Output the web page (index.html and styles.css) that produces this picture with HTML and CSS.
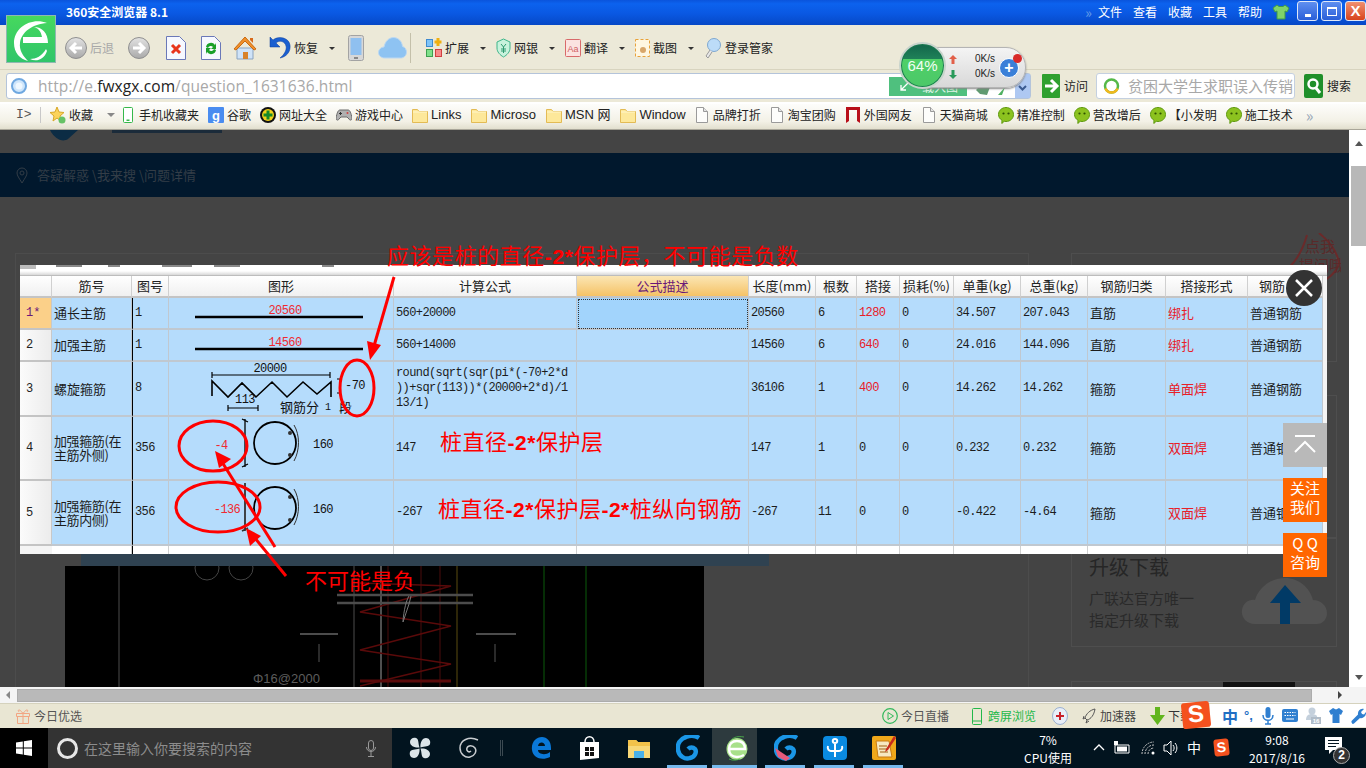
FILE: index.html
```html
<!DOCTYPE html>
<html lang="zh">
<head>
<meta charset="utf-8">
<title>360安全浏览器 8.1</title>
<link rel="stylesheet" href="styles.css">
</head>
<body>
<svg class="defs" width="0" height="0">
  <symbol id="folder" viewBox="0 0 16 16"><path d="M.5 2.500h5l1.500 2h8.500v11H.5z" fill="#fde89a" stroke="#e3bb55"/><path d="M1 5h14" stroke="#fff6cc"/></symbol>
  <symbol id="doc" viewBox="0 0 12 16"><path d="M.5.5h7l4 4v11H.5z" fill="#fdfdfb" stroke="#9a9a9a"/><path d="M7.500.5v4h4" fill="#e4e4e4" stroke="#9a9a9a"/></symbol>
  <symbol id="chat" viewBox="0 0 16 17"><path d="M8 .5c4.200 0 7.500 3 7.500 7s-3.300 7-7.500 7c-.6 0-1.200-.1-1.800-.2L3.800 16.500l.2-3.200C1.900 12 .5 10 .5 7.500.5 3.500 3.800.5 8 .5z" fill="#8cc21f" stroke="#5f9a10"/><circle cx="5.500" cy="6.500" r="1.100" fill="#2f5200"/><circle cx="10.500" cy="6.500" r="1.100" fill="#2f5200"/></symbol>
  <symbol id="gball" viewBox="0 0 22 22"><circle cx="11" cy="11" r="10.500" fill="url(#ballGrad)" stroke="#8f8f8f"/></symbol>
  <symbol id="gswirl" viewBox="0 0 24 26"><path d="M23 3c-3-2-8-3-13-1C4 4 1 9 2 15c1 6 7 10 12 8 5-1 7-6 5-9-2-2-5-2-7 0" fill="none" stroke="#1a96e6" stroke-width="4.500"/></symbol>
  <linearGradient id="ballGrad" x1="0" y1="0" x2="0" y2="1"><stop offset="0" stop-color="#e2e2e2"/><stop offset="1" stop-color="#a9a9a9"/></linearGradient>
</svg>

<header class="titlebar">
  <span class="title">360安全浏览器 8.1</span>
  <nav class="menu">
    <span class="chev">»</span><span>文件</span><span>查看</span><span>收藏</span><span>工具</span><span>帮助</span>
    <svg class="shirt" width="18" height="16" viewBox="0 0 18 16"><path d="M5 1 1 4l2 4 2-1v8h8V7l2 1 2-4-4-3-2 1.500H7z" fill="#7fd36a" stroke="#3f9a4a"/></svg>
  </nav>
  <div class="winbtns">
    <span class="wbtn"><i class="wmin"></i></span>
    <span class="wbtn"><i class="wmax"></i></span>
    <span class="wbtn wclose">X</span>
  </div>
</header>

<div class="toolbar">
  <span class="tool tool-back"><svg width="22" height="22"><use href="#gball"/><path d="M17 11H7m4-5-5 5 5 5" fill="none" stroke="#fff" stroke-width="3"/></svg><span class="dim">后退</span></span>
  <span class="tool tool-fwd"><svg width="22" height="22"><use href="#gball"/><path d="M5 11h10m-4-5 5 5-5 5" fill="none" stroke="#fff" stroke-width="3"/></svg></span>
  <span class="tool tool-stop"><svg width="20" height="24" viewBox="0 0 20 24"><path d="M.5.5h13l6 6v17H.5z" fill="#f6f8ff" stroke="#6a78b8"/><path d="M6 9l8 8m0-8-8 8" stroke="#e8341c" stroke-width="3"/></svg></span>
  <span class="tool tool-ref"><svg width="20" height="24" viewBox="0 0 20 24"><path d="M.5.5h13l6 6v17H.5z" fill="#f6f8ff" stroke="#6a78b8"/><path d="M5 11a5 5 0 0 1 9-2l1-2v6h-5l2-2a3 3 0 0 0-5 1zM15 14a5 5 0 0 1-9 2l-1 2v-6h5l-2 2a3 3 0 0 0 5-1z" fill="#1aa02a"/></svg></span>
  <span class="tool tool-home"><svg width="24" height="24" viewBox="0 0 24 24"><path d="M4 12v11h16V12z" fill="#cfe3f8" stroke="#8aa3c0"/><path d="M1 13 12 1l11 12-2 1-9-9-9 9z" fill="#f0902a" stroke="#c96a10"/><path d="M10 16h5v7h-5z" fill="#d8822a"/><path d="M17 2h3v5l-3-3z" fill="#d86a1a"/></svg></span>
  <span class="tool tool-undo"><svg width="22" height="24" viewBox="0 0 22 24"><path d="M1 1v10h10L7 7c3-3 9-2 10 3 1 4-2 9-6 12 6-1 11-6 10-13C20 2 10-1 4 4z" fill="#1a5fd0" stroke="#0f3f9a" stroke-width=".5"/></svg><span>恢复</span><i class="caret"></i></span>
  <span class="tool tool-phone"><svg width="16" height="26" viewBox="0 0 16 26"><rect x=".5" y=".5" width="15" height="25" rx="2" fill="#d7d7d7" stroke="#a3a3a3"/><rect x="2.500" y="3" width="11" height="17" fill="#8fc0f0"/><rect x="6" y="22" width="4" height="2" fill="#888"/></svg></span>
  <span class="tool tool-cloud"><svg width="29" height="22" viewBox="0 0 29 22"><path d="M7 21C3 21 .5 18.500.5 15.500.5 12.500 3 10 6 10c1-5.500 5-9.500 9.500-9.500S24 4 24.500 9.500c2.500.5 4 3 4 5.500 0 3.500-2.500 6-6 6z" fill="#8ec3f2" stroke="#bcd8f2"/></svg></span>
  <span class="tool-sep"></span>
  <span class="tool tool-ext"><svg width="16" height="20" viewBox="0 0 16 20"><rect x=".5" y="1.500" width="6" height="7" fill="#7fc4f8" stroke="#3e8ad0"/><rect x=".5" y="11.500" width="6" height="7" fill="#7fe08a" stroke="#3ea050"/><rect x="9.500" y="11.500" width="6" height="7" fill="#f88a8a" stroke="#d04040"/><path d="M12 0v8M8.500 4h7" stroke="#f0b010" stroke-width="3"/></svg><span>扩展</span><i class="caret"></i></span>
  <span class="tool tool-bank"><svg width="15" height="20" viewBox="0 0 15 20"><path d="M7.500 1 14 4v6c0 4-3 7-6.500 9C4 17 1 14 1 10V4z" fill="#c8f2dc" stroke="#3fb58a"/><path d="M5 6l2.500 3L10 6M7.500 9v6M5 11h5M5 13h5" stroke="#2f9a70" fill="none"/></svg><span>网银</span><i class="caret"></i></span>
  <span class="tool tool-trans"><svg width="16" height="20" viewBox="0 0 16 20"><rect x=".5" y="1.500" width="15" height="17" rx="1" fill="#fbe3e0" stroke="#d86a6a"/><text x="8" y="14" class="aa">Aa</text></svg><span>翻译</span><i class="caret"></i></span>
  <span class="tool tool-shot"><svg width="15" height="20" viewBox="0 0 15 20"><rect x=".5" y="1.500" width="14" height="17" fill="#fff7e2" stroke="#e8a23a" stroke-dasharray="3 2"/><circle cx="8" cy="12" r="3" fill="#d8a66a"/></svg><span>截图</span><i class="caret"></i></span>
  <span class="tool tool-key"><svg width="16" height="22" viewBox="0 0 16 22"><circle cx="9" cy="8" r="6.500" fill="#bcdcf8" stroke="#7fa8d0"/><path d="M5 13 1 19l2 2 4-6" fill="#e8e8e8" stroke="#9a9a9a"/></svg><span>登录管家</span></span>
</div>

<div class="addrbar">
  <div class="addr">
    <svg class="globe" width="16" height="16" viewBox="0 0 16 16"><circle cx="8" cy="8" r="7" fill="#cfe6fb" stroke="#6fa8e0" stroke-width="2"/><circle cx="8" cy="8" r="3.500" fill="#eff8ff"/></svg>
    <span class="url">http://e.<b>fwxgx.com</b>/question_1631636.html</span>
    <span class="addr-load"><svg width="9" height="9" viewBox="0 0 9 9"><path d="M8 1 1 8M1 3v5h5" fill="none" stroke="#fff" stroke-width="1.300"/></svg><span>载入图</span></span>
    <svg class="addr-ico" width="30" height="12" viewBox="0 0 30 12"><path d="M0 6 6 0l8 3-3 8-7-1z" fill="#5f9a70"/><path d="M22 11 29 3l-3 8z" fill="#4fb060"/></svg>
    <span class="addr-drop"><svg width="9" height="6" viewBox="0 0 9 6"><path d="M1 1l3.500 3.500L8 1" fill="none" stroke="#3a5a90" stroke-width="2"/></svg></span>
  </div>
  <span class="go"><svg width="18" height="24" viewBox="0 0 18 24"><rect width="18" height="24" fill="#2fa02f" rx="1"/><path d="M3 12h11m-5-6 6 6-6 6" stroke="#fff" stroke-width="3" fill="none"/></svg><span>访问</span></span>
  <div class="searchbox">
    <svg width="18" height="18" viewBox="0 0 18 18"><circle cx="8.500" cy="9" r="6.500" fill="none" stroke="#55b848" stroke-width="2.500"/><path d="M2.500 11.500a6.500 6.500 0 0 0 12 0" fill="none" stroke="#f2b71c" stroke-width="2.500"/></svg>
    <span class="sq">贫困大学生求职误入传销</span>
  </div>
  <span class="sbtn"><svg width="19" height="24" viewBox="0 0 19 24"><rect width="19" height="24" rx="2" fill="#1f8f2a"/><circle cx="9" cy="10" r="4.500" fill="none" stroke="#fff" stroke-width="2.500"/><path d="M12 14l4 5" stroke="#fff" stroke-width="3"/></svg><span>搜索</span></span>
</div>

<div class="bookmarks">
  <span class="bm-toggle">I&gt;</span><i class="bm-sep"></i>
  <span class="bm bm-first"><svg width="16" height="18" viewBox="0 0 16 18"><path d="M7 1l2 5 5 .5-4 3.500 1 5-4-3-4 3 1-5L0 6.500 5 6z" fill="#fbd35a" stroke="#d8a828"/><circle cx="12" cy="14" r="3.500" fill="#66c266"/></svg>收藏<i class="caret bm-caret"></i></span>
  <span class="bm bm-ph"><svg width="10" height="16" viewBox="0 0 10 16"><rect x=".5" y=".5" width="9" height="15" rx="1" fill="#fff" stroke="#35b84a"/><rect x="3.500" y="12.500" width="3" height="1.500" fill="#35b84a"/></svg>手机收藏夹</span>
  <span class="bm"><svg width="16" height="16" viewBox="0 0 16 16"><rect width="16" height="16" rx="1" fill="#4a8cf0"/><text x="8" y="13" class="gg">g</text></svg>谷歌</span>
  <span class="bm"><svg width="16" height="16" viewBox="0 0 16 16"><circle cx="8" cy="8" r="8" fill="#111"/><circle cx="8" cy="8" r="6" fill="#f2d21a"/><path d="M8 3.500v9M3.500 8h9" stroke="#168a2a" stroke-width="3"/></svg>网址大全</span>
  <span class="bm"><svg width="16" height="14" viewBox="0 0 16 14"><path d="M4 2h8c2 0 3 3 4 8 .3 2-2 3-3 1l-2-2H5l-2 2c-1 2-3.300 1-3-1C1 5 2 2 4 2z" fill="#b0b0b0" stroke="#6a6a6a"/><circle cx="11.500" cy="5" r="1" fill="#d04040"/><path d="M3 5.500h3M4.500 4v3" stroke="#333"/></svg>游戏中心</span>
  <span class="bm bm-l"><svg width="16" height="16"><use href="#folder"/></svg>Links</span>
  <span class="bm bm-l"><svg width="16" height="16"><use href="#folder"/></svg>Microso</span>
  <span class="bm bm-l"><svg width="16" height="16"><use href="#folder"/></svg>MSN 网</span>
  <span class="bm bm-l"><svg width="16" height="16"><use href="#folder"/></svg>Window</span>
  <span class="bm bm-d"><svg width="12" height="16"><use href="#doc"/></svg>品牌打折</span>
  <span class="bm bm-d"><svg width="12" height="16"><use href="#doc"/></svg>淘宝团购</span>
  <span class="bm bm-r"><svg width="14" height="16" viewBox="0 0 14 16"><path d="M0 0h14v16l-3-2V3H3v11l-3 2z" fill="#b80f1a"/></svg>外国网友</span>
  <span class="bm bm-d"><svg width="12" height="16"><use href="#doc"/></svg>天猫商城</span>
  <span class="bm"><svg width="16" height="17"><use href="#chat"/></svg>精准控制</span>
  <span class="bm"><svg width="16" height="17"><use href="#chat"/></svg>营改增后</span>
  <span class="bm"><svg width="16" height="17"><use href="#chat"/></svg>【小发明</span>
  <span class="bm"><svg width="16" height="17"><use href="#chat"/></svg>施工技术</span>
  <span class="bm-more">»</span>
</div>

<div class="viewport">
  <div class="page">
    <div class="site-head">
      <svg class="fish" width="34" height="13" viewBox="0 0 34 13"><path d="M2 0c4 8 12 13 18 9L30 0z" fill="#0c2c44"/></svg>
      <span class="ghost"></span>
    </div>
    <div class="crumbs">
      <svg width="12" height="17" viewBox="0 0 12 17"><path d="M6 16C3 11 1 8.500 1 6a5 5 0 0 1 10 0c0 2.500-2 5-5 10z" fill="none" stroke="#333d47"/><circle cx="6" cy="6" r="2" fill="none" stroke="#333d47"/></svg>
      <span>答疑解惑 \我来搜 \问题详情</span>
    </div>
    <div class="columns">
      <div class="mainbox">
        <div class="bluestrip"></div>
        <svg class="cad" width="639" height="122" viewBox="0 0 639 122">
          <rect width="639" height="122" fill="#000"/>
          <circle cx="142" cy="2" r="12" fill="none" stroke="#444"/><circle cx="176" cy="2" r="12" fill="none" stroke="#444"/>
          <path d="M54 0v122M289 0v122" stroke="#4c4c4c" fill="none"/>
          <path d="M316 0v122" stroke="#6a6a6a" stroke-width="1.500"/>
          <path d="M323 0v122M356 0v122M375 0v122" stroke="#4a0c0c"/>
          <path d="M392 0v122" stroke="#5a4c10"/>
          <path d="M479 0v122M521 0v122" stroke="#0a5a0a"/>
          <path d="M295 17l91 3-91 26 91 14-91 24 91 14-91 22" fill="none" stroke="#5a0a0a" stroke-width="1.500"/>
          <path d="M295 115h91" stroke="#5a0a0a" stroke-width="3"/>
          <path d="M272 29h136M272 37h136" stroke="#4c4c4c" stroke-width="2.500"/>
          <path d="M344 30c-4 6-6 22-6 26l6-18 2-8" stroke="#777" fill="none"/>
          <path d="M235 68h38M411 68h40" stroke="#4c4c4c" stroke-width="2"/>
          <path d="M254 78v18M430 78v18" stroke="#555"/>
          <text x="188" y="117" class="cadtext">Φ16@2000</text>
        </svg>
      </div>
      <aside class="sidecol">
        <div class="sbox sbox-a"></div>
        <div class="sbox sbox-b"></div>
        <div class="sbox sbox-c">
          <h3>升级下载</h3>
          <p>广联达官方唯一</p>
          <p>指定升级下载</p>
          <svg class="upcloud" width="86" height="48" viewBox="0 0 86 48"><path d="M14 46C4 46 0 38 1 32c1-7 7-11 13-10C18 9 30 0 44 0s25 10 28 22c8 0 14 6 14 13 0 6-4 11-10 11z" fill="#525252"/><path d="M44 7 29 25h10v21h10V25h11z" fill="#013a66"/></svg>
        </div>
        <div class="sbox sbox-d"><span class="photo"></span></div>
      </aside>
    </div>
    <svg class="askbadge" width="62" height="56" viewBox="0 0 62 56"><path d="M8 36C18 28 24 16 28 2M40 0c10 8 18 18 20 30-2 10-12 16-24 24" fill="none" stroke="#6a2a2a" stroke-width="2"/><text x="26" y="19" class="asktext">点我</text><text x="20" y="38" class="asktext">提问哦</text></svg>
  </div>
  <div class="vscroll">
    <span class="arrow-up"></span>
    <span class="vthumb"></span>
    <span class="arrow-down"></span>
  </div>
</div>

<div class="hscroll"><span class="arrow-left"></span><span class="hthumb"></span><span class="arrow-right"></span></div>

<footer class="statusbar">
  <span class="st st-gift"><svg width="16" height="16" viewBox="0 0 16 16"><path d="M1.500 5.500h13v3h-13zM2.500 8.500h11v7h-11zM8 5.500v10M8 5.500C5 1 2 1 4 4M8 5.500C11 1 14 1 12 4" fill="none" stroke="#f2a582"/></svg>今日优选</span>
  <span class="st st-live"><svg width="16" height="16" viewBox="0 0 16 16"><circle cx="8" cy="8" r="7.300" fill="none" stroke="#33b85c" stroke-width="1.200"/><path d="M6 4.500v7l5.500-3.500z" fill="none" stroke="#33b85c"/></svg>今日直播</span>
  <span class="st st-cross"><svg width="10" height="17" viewBox="0 0 10 17"><rect x=".5" y=".5" width="9" height="16" rx="1" fill="none" stroke="#22b84a"/><path d="M0 13h10" stroke="#22b84a"/></svg>跨屏浏览</span>
  <span class="st st-shield"><svg width="16" height="18" viewBox="0 0 16 18"><ellipse cx="8" cy="9" rx="7.500" ry="8.500" fill="#e8eef8" stroke="#9ab0d0"/><path d="M8 5v8M4 9h8" stroke="#c8202a" stroke-width="2"/></svg></span>
  <span class="st st-rocket"><svg width="14" height="16" viewBox="0 0 14 16"><path d="M13 1C8 2 4 6 3 10l2 2c4-1 7-5 8-11zM3 10l-2 1 1-3M5 12l-1 3 3-2" fill="none" stroke="#555"/></svg>加速器</span>
  <span class="st st-dl"><svg width="15" height="18" viewBox="0 0 15 18"><path d="M5 0h5v8h5l-7.500 10L0 8h5z" fill="#62b51e"/></svg>下载</span>
</footer>

<div class="ime">
  <span class="ime-s">S</span>
  <div class="ime-bar">
    <b class="ime-zh">中</b>
    <b class="ime-dot">°,</b>
    <svg width="12" height="18" viewBox="0 0 12 18"><rect x="3.500" y="0" width="5" height="11" rx="2.500" fill="#2f7fd0"/><path d="M1 8c0 7 10 7 10 0M6 13v4M3 17h6" fill="none" stroke="#2f7fd0" stroke-width="1.500"/></svg>
    <svg width="16" height="13" viewBox="0 0 16 13"><rect width="16" height="13" rx="2" fill="#2f7fd0"/><path d="M2.500 3.500h11M2.500 6.500h11" stroke="#fff" stroke-dasharray="1.500 1"/><path d="M4 10h8" stroke="#fff"/></svg>
    <svg width="15" height="17" viewBox="0 0 15 17"><circle cx="6" cy="4" r="3.500" fill="#c4d0dc"/><path d="M0 13c0-4 2-6 6-6 3 0 4 1 5 2v4z" fill="#c4d0dc"/><rect x="5" y="10" width="10" height="7" fill="#b0bcc8"/><text x="10" y="16" class="ime-n">16</text></svg>
    <svg width="14" height="15" viewBox="0 0 14 15"><path d="M4 0 0 3l2 4 1.500-1v9h7V6L12 7l2-4-4-3-3 1.500z" fill="#2f7fd0"/></svg>
    <svg width="15" height="16" viewBox="0 0 15 16"><path d="M1 15c-1-1-.6-2 0-2.600l6-6C6.500 3 9 0 13 1l-3 3 1 2 2 .5 2-2.500c.5 4-3 7-6 6l-6 5.500c-.6.600-1.500.500-2 0z" fill="#2f7fd0"/></svg>
  </div>
</div>

<div class="taskbar">
  <span class="start"><svg width="16" height="16" viewBox="0 0 16 16"><path d="M0 2.500 6.800 1.500v6H0zM7.800 1.300 16 0v7.500H7.800zM0 8.500h6.800v6L0 13.500zM7.800 8.500H16V16l-8.200-1.300z" fill="#fff"/></svg></span>
  <div class="tsearch">
    <span class="cortana"></span>
    <span class="tstext">在这里输入你要搜索的内容</span>
    <svg class="tmic" width="10" height="17" viewBox="0 0 10 17"><rect x="2.500" y=".5" width="5" height="10" rx="2.500" fill="none" stroke="#999"/><path d="M.5 7c0 6 9 6 9 0M5 12v4M2 16.500h6" fill="none" stroke="#999"/></svg>
  </div>
  <span class="slot"><svg width="22" height="22" viewBox="0 0 22 22"><g fill="#dce4e8"><path d="M10.500 10.500C6 11 1 9 1 5c0-3 3-5 6-4 3 1 2 5 3.500 9.500z"/><path d="M11.500 10.500C11 6 13 1 17 1c3 0 5 3 4 6-1 3-5 2-9.500 3.500z"/><path d="M11.500 11.500C16 11 21 13 21 17c0 3-3 5-6 4-3-1-2-5-3.500-9.500z"/><path d="M10.500 11.500C11 16 9 21 5 21c-3 0-5-3-4-6 1-3 5-2 9.500-3.500z"/></g></svg></span>
  <span class="slot"><svg width="20" height="22" viewBox="0 0 20 22"><path d="M19 3C10-1 1 3 1 11c0 6 5 10 10 9 5-1 7-6 5-9-2-3-7-3-8 0-1 3 2 5 4 3" fill="none" stroke="#c8ccd0" stroke-width="1.500"/></svg></span>
  <i class="tsep"></i>
  <span class="slot slot-lead"><svg width="20" height="22" viewBox="0 0 20 22"><path d="M1 13C0 5 5 0 11 0c5 0 9 4 9 11v2H7c0 4 7 6 12 2v5c-8 4-17 1-18-7zm6-4h7c0-4-6-5-7 0z" fill="#0a78d8"/></svg></span>
  <span class="slot"><svg width="21" height="24" viewBox="0 0 21 24"><path d="M1 6h19v16l-19 2z" fill="#fff"/><path d="M6 6c0-7 9-7 9 0" fill="none" stroke="#fff" stroke-width="1.500"/><path d="M6 11h4v4H6zM11 11h4v4h-4zM6 16h4v4H6zM11 16h4v4h-4z" fill="#111"/></svg></span>
  <span class="slot"><svg width="22" height="20" viewBox="0 0 22 20"><path d="M0 2h8l2 2h12v16H0z" fill="#f8d878"/><path d="M0 2h8l2 2h12v4H0z" fill="#f2c24a"/><path d="M6 13h10v7H6z" fill="#4ab0e8"/></svg></span>
  <span class="slot slot-on"><svg width="24" height="26"><use href="#gswirl"/></svg><i class="under"></i></span>
  <span class="slot slot-active"><svg width="22" height="25" viewBox="0 0 22 25"><ellipse cx="11" cy="13" rx="10.500" ry="11" fill="#a8e08a"/><path d="M3 13h16c0-6-3-8-8-8-5 0-8 3-8 8s3 8 8 8c3 0 5-1 7-2" fill="none" stroke="#fff" stroke-width="2.500"/><path d="M18 1C12 0 8 1 5 4M3 23c4 2 8 1 11 0" stroke="#4aa84a" fill="none"/></svg><i class="under under-a"></i></span>
  <span class="slot slot-on"><svg width="24" height="26" viewBox="0 0 24 26"><use href="#gswirl" width="24" height="26"/><path d="M1 13l15 10-4 3-8-4z" fill="#e85a7a"/></svg><i class="under"></i></span>
  <span class="slot slot-on"><svg width="24" height="24" viewBox="0 0 24 24"><rect width="24" height="24" rx="4" fill="#0a8ae0"/><path d="M12 3c-3 0-3 4 0 4s3-4 0-4zM12 7v14M5 10c-1 3 1 5 3 5h8c2 0 4-2 3-5" fill="none" stroke="#fff" stroke-width="2"/></svg><i class="under"></i></span>
  <span class="slot slot-on"><svg width="24" height="24" viewBox="0 0 24 24"><rect width="24" height="24" rx="2" fill="#f0a81a"/><path d="M4 5h13l3 16H6z" fill="#f6e8c0" stroke="#c87a10"/><path d="M7 10h8M7 13h9M8 16h8" stroke="#a06010"/><path d="M22 0 14 13l-1 3 3-2 8-12z" fill="#c82a1a"/></svg><i class="under"></i></span>
  <div class="tray">
    <div class="cpu"><span>7%</span><span>CPU使用</span></div>
    <svg class="tr-up" width="12" height="8" viewBox="0 0 12 8"><path d="M1 7l5-5 5 5" fill="none" stroke="#fff" stroke-width="1.300"/></svg>
    <svg class="tr-bat" width="16" height="14" viewBox="0 0 16 14"><path d="M1 4h14v8H1z" fill="none" stroke="#fff"/><path d="M3 5.500h10v5H3z" fill="#fff"/><path d="M0 0h4v4H0z" fill="#fff"/></svg>
    <svg class="tr-wifi" width="14" height="14" viewBox="0 0 14 14"><path d="M1 13A12 12 0 0 1 13 1M4 13a9 9 0 0 1 9-9M7 13a6 6 0 0 1 6-6" fill="none" stroke="#c8c8c8" stroke-dasharray="2 1"/><circle cx="12" cy="12" r="1.500" fill="#fff"/></svg>
    <svg class="tr-vol" width="15" height="16" viewBox="0 0 15 16"><path d="M1 5h3l4-4v14l-4-4H1z" fill="none" stroke="#fff"/><path d="M10 5c1.500 2 1.500 4 0 6M12 3c2.500 3 2.500 7 0 10" fill="none" stroke="#fff"/></svg>
    <span class="tr-zh">中</span>
    <span class="tr-s">S</span>
    <div class="clock"><span>9:08</span><span>2017/8/16</span></div>
    <span class="notif"><svg width="17" height="18" viewBox="0 0 17 18"><path d="M0 0h17v13H8l-4 4v-4H0z" fill="#fff"/><path d="M3 3.500h11M3 6.500h11M3 9.500h8" stroke="#02141f"/></svg><b class="badge">2</b></span>
  </div>
</div>

<section class="modal">
  <div class="modal-top"><i class="g0"></i><i class="g1"></i><i class="g2"></i><i class="g3"></i><i class="g4"></i><i class="g5"></i></div>
  <div class="sheet">
    <div class="hd"></div><div class="hd">筋号</div><div class="hd">图号</div><div class="hd">图形</div><div class="hd">计算公式</div><div class="hd hd-on">公式描述</div><div class="hd">长度(mm)</div><div class="hd">根数</div><div class="hd">搭接</div><div class="hd">损耗(%)</div><div class="hd">单重(kg)</div><div class="hd">总重(kg)</div><div class="hd">钢筋归类</div><div class="hd">搭接形式</div><div class="hd hd-last">钢筋</div>

    <div class="rh rh-on">1*</div><div class="c cn">通长主筋</div><div class="c m bl">1</div>
    <div class="c fig"><svg width="225" height="32" viewBox="169 298 225 32"><path d="M195 318h168" stroke="#000" stroke-width="2.500"/><text x="285" y="315" class="red-n">20560</text></svg></div>
    <div class="c m">560+20000</div><div class="c sel"></div><div class="c m">20560</div><div class="c m">6</div><div class="c m r">1280</div><div class="c m">0</div><div class="c m">34.507</div><div class="c m">207.043</div><div class="c cn">直筋</div><div class="c cn r">绑扎</div><div class="c cn">普通钢筋</div>

    <div class="rh">2</div><div class="c cn">加强主筋</div><div class="c m bl">1</div>
    <div class="c fig"><svg width="225" height="32" viewBox="169 330 225 32"><path d="M195 350h168" stroke="#000" stroke-width="2.500"/><text x="285" y="347" class="red-n">14560</text></svg></div>
    <div class="c m">560+14000</div><div class="c"></div><div class="c m">14560</div><div class="c m">6</div><div class="c m r">640</div><div class="c m">0</div><div class="c m">24.016</div><div class="c m">144.096</div><div class="c cn">直筋</div><div class="c cn r">绑扎</div><div class="c cn">普通钢筋</div>

    <div class="rh">3</div><div class="c cn">螺旋箍筋</div><div class="c m bl">8</div>
    <div class="c fig"><svg width="225" height="55" viewBox="169 362 225 55">
      <text x="270" y="373" class="blk-n">20000</text>
      <path d="M212 376h118M212 373v6M330 373v6" stroke="#000" stroke-width="1.200" fill="none"/>
      <path d="M212 397v-15l16 16 14-14 14 14 16-15 15 15 16-15 14 12 14-12v15" fill="none" stroke="#000" stroke-width="1.600"/>
      <text x="245" y="404" class="blk-n">113</text>
      <path d="M228 409h30M228 406v6M258 406v6" stroke="#000" stroke-width="1.200" fill="none"/>
      <text x="280" y="413" class="blk-c">钢筋分</text><text x="325" y="411" class="blk-s">1</text><text x="339" y="413" class="blk-c">段</text>
      <path d="M337 380h3v14h-3" fill="none" stroke="#000"/>
      <text x="355" y="390" class="blk-n">-70</text>
    </svg></div>
    <div class="c m f3">round(sqrt(sqr(pi*(-70+2*d<br>))+sqr(113))*(20000+2*d)/1<br>13/1)</div><div class="c"></div><div class="c m">36106</div><div class="c m">1</div><div class="c m r">400</div><div class="c m">0</div><div class="c m">14.262</div><div class="c m">14.262</div><div class="c cn">箍筋</div><div class="c cn r">单面焊</div><div class="c cn">普通钢筋</div>

    <div class="rh">4</div><div class="c cn l2">加强箍筋(在<br>主筋外侧)</div><div class="c m bl">356</div>
    <div class="c fig"><svg width="225" height="64" viewBox="169 417 225 64">
      <text x="221" y="450" class="red-n">-4</text>
      <path d="M245 420v48M242 420l6 3M242 468l6-3" stroke="#000" stroke-width="1.300" fill="none"/>
      <circle cx="275" cy="444" r="21" fill="none" stroke="#000" stroke-width="1.800"/>
      <circle cx="290" cy="434" r="2" fill="#333"/><circle cx="290" cy="456" r="2" fill="#333"/>
      <path d="M294 426c6 10 6 25 0 36" fill="none" stroke="#333"/>
      <text x="323" y="449" class="blk-n">160</text>
    </svg></div>
    <div class="c m">147</div><div class="c"></div><div class="c m">147</div><div class="c m">1</div><div class="c m">0</div><div class="c m">0</div><div class="c m">0.232</div><div class="c m">0.232</div><div class="c cn">箍筋</div><div class="c cn r">双面焊</div><div class="c cn">普通钢筋</div>

    <div class="rh">5</div><div class="c cn l2">加强箍筋(在<br>主筋内侧)</div><div class="c m bl">356</div>
    <div class="c fig"><svg width="225" height="65" viewBox="169 481 225 65">
      <text x="227" y="514" class="red-n">-136</text>
      <path d="M245 484v48M242 532l6-3" stroke="#333" stroke-width="1.800" fill="none"/>
      <circle cx="275" cy="509" r="21" fill="none" stroke="#000" stroke-width="1.800"/>
      <circle cx="290" cy="498" r="2" fill="#333"/><circle cx="290" cy="521" r="2" fill="#333"/>
      <path d="M294 490c6 10 6 25 0 36" fill="none" stroke="#333"/>
      <text x="323" y="514" class="blk-n">160</text>
    </svg></div>
    <div class="c m">-267</div><div class="c"></div><div class="c m">-267</div><div class="c m">11</div><div class="c m">0</div><div class="c m">0</div><div class="c m">-0.422</div><div class="c m">-4.64</div><div class="c cn">箍筋</div><div class="c cn r">双面焊</div><div class="c cn">普通钢筋</div>

    <div class="rh rh6"></div><div class="e"></div><div class="e bl"></div><div class="e"></div><div class="e"></div><div class="e"></div><div class="e"></div><div class="e"></div><div class="e"></div><div class="e"></div><div class="e"></div><div class="e"></div><div class="e"></div><div class="e"></div><div class="e"></div>
  </div>
</section>

<svg class="marks" width="1366" height="768" viewBox="0 0 1366 768">
  <g fill="none" stroke="#f00" stroke-width="3">
    <ellipse cx="357" cy="388" rx="17" ry="28"/>
    <ellipse cx="213" cy="446" rx="34" ry="25"/>
    <ellipse cx="218" cy="507" rx="42" ry="25"/>
    <path d="M394 277 374 346"/>
    <path d="M275 547 222 462"/>
    <path d="M286 576 254 537"/>
  </g>
  <g fill="#f00">
    <path d="M370 360 367 341 381 345z"/>
    <path d="M215 451 231 459 219 468z"/>
    <path d="M246 528 261 536 250 546z"/>
  </g>
</svg>
<p class="note n1">应该是桩的直径<b>-2*</b>保护层，不可能是负数</p>
<p class="note n2">桩直径<b>-2*</b>保护层</p>
<p class="note n3">桩直径<b>-2*</b>保护层<b>-2*</b>桩纵向钢筋</p>
<p class="note n4">不可能是负</p>

<button class="closex" type="button"><svg width="18" height="18" viewBox="0 0 18 18"><path d="M1 1l16 16M17 1 1 17" stroke="#fff" stroke-width="2.500"/></svg></button>
<div class="sidetools">
  <span class="st-top"><svg width="26" height="20" viewBox="0 0 26 20"><path d="M3 1h20M3 17 13 7l10 10" fill="none" stroke="#fff" stroke-width="2"/></svg></span>
  <span class="st-org">关注<br>我们</span>
  <span class="st-org">Q Q<br>咨询</span>
</div>

<div class="logo"><svg width="50" height="48" viewBox="0 0 50 48"><path d="M41 8C26 2 8 12 8 28c0 10 6 16 14 18-5-5-9-11-8-18C15 17 27 9 41 8z" fill="#fff"/><path d="M17 22h19c-1-6-4-9-8-10 8 0 14 6 14 16H17z" fill="#fff"/><path d="M40 34c-4 7-10 10-16 10 6 3 14 1 17-8z" fill="#fff"/></svg></div>

<div class="netw">
  <div class="ball"><span>64%</span></div>
  <div class="speeds">
    <svg width="8" height="9" viewBox="0 0 8 9"><path d="M4 0l4 4H5.500v5h-3V4H0z" fill="#e2604a"/></svg><span>0K/s</span>
    <svg width="8" height="9" viewBox="0 0 8 9"><path d="M4 9l4-4H5.500V0h-3v5H0z" fill="#2a9a5a"/></svg><span>0K/s</span>
  </div>
  <span class="plus">+<i></i></span>
</div>
</body>
</html>
```

FILE: styles.css
```css
* { box-sizing: border-box; }
html, body { margin: 0; padding: 0; }
body {
  width: 1366px; height: 768px; overflow: hidden; position: relative;
  display: flex; flex-direction: column;
  font: 12px/16px "Noto Sans CJK SC", "Liberation Sans", sans-serif;
  color: #222; background: #444;
}
svg { display: block; flex: none; }
.defs { position: absolute; }
i { font-style: normal; display: block; }

/* title bar */
.titlebar {
  height: 25px; flex: none; display: flex; align-items: flex-start;
  background: linear-gradient(#0a54dc, #0c62ee 15%, #0a58e2 55%, #0648c6);
  color: #fff; padding-left: 66px; position: relative;
}
.title { font-weight: 700; line-height: 24px; font-size: 12px; width: 120px; }
.menu { margin-left: auto; margin-right: 76px; display: flex; gap: 11px; align-items: center; height: 24px; }
.menu .chev { color: #6aa0e8; margin-right: -5px; font-size: 14px; }
.shirt { margin-left: -1px; }
.winbtns { position: absolute; right: 0; top: 1px; display: flex; gap: 3px; }
.wbtn {
  width: 21px; height: 20px; border: 1px solid #dfe8f8; border-radius: 3px;
  background: linear-gradient(#5f8ff0, #2a5fd8); display: flex; align-items: center; justify-content: center;
  color: #fff; font: 700 15px/18px "Liberation Sans", sans-serif;
}
.wmin { width: 6px; height: 3px; background: #fff; margin-top: 8px; }
.wmax { width: 10px; height: 9px; border: 1px solid #fff; border-top-width: 2px; }
.wclose { background: linear-gradient(#f09070, #d8441c); }

/* tool bar */
.toolbar {
  height: 45px; flex: none; background: #ece9d8; display: flex; align-items: center;
  padding: 2px 0 0 65px; border-bottom: 1px solid #d8d4bf;
}
.tool { display: flex; align-items: center; gap: 3px; flex: none; }
.tool span { white-space: nowrap; }
.dim { color: #a8a8a8; }
.tool-back { width: 63px; }
.tool-fwd { width: 38px; }
.tool-stop { width: 35px; }
.tool-ref { width: 32px; }
.tool-home { width: 36px; }
.tool-undo { width: 79px; gap: 3px; }
.tool-phone { width: 30px; }
.tool-cloud { width: 32px; }
.tool-sep { width: 1px; height: 30px; background: #c4c0aa; margin-right: 15px; }
.tool-ext { width: 70px; }
.tool-bank { width: 69px; }
.tool-trans { width: 70px; }
.tool-shot { width: 70px; }
.tool-key { width: 80px; gap: 4px; }
.caret { width: 0; height: 0; border: 3px solid transparent; border-top: 3px solid #333; border-bottom: 0; margin-left: 8px; }

/* address bar */
.addrbar {
  height: 32px; flex: none; background: #ece9d8; display: flex; align-items: center;
  padding-left: 6px;
}
.addr {
  width: 1025px; height: 26px; background: #fff; border: 1px solid #b4c4da; border-radius: 3px;
  display: flex; align-items: center; padding-left: 4px; position: relative;
}
.url { margin-left: 11px; font: 15.500px/24px "Open Sans", "Liberation Sans", sans-serif; color: #a8a8a8; white-space: nowrap; letter-spacing: .1px; }
.url b { color: #222; font-weight: 400; }
.addr-load {
  margin-left: auto; width: 78px; height: 19px; background: #4fc07e; color: #dff5e6;
  display: flex; align-items: center; justify-content: space-between; padding: 0 9px 0 11px; line-height: 19px; flex: none;
}
.addr-ico { margin: 8px 9px 0 9px; }
.addr-drop { width: 15px; height: 24px; background: #aec8f2; display: flex; align-items: center; justify-content: center; padding-top: 3px; flex: none; }
.go { display: flex; align-items: center; gap: 4px; margin-left: 11px; }
.searchbox {
  margin-left: 8px; width: 199px; height: 26px; background: #fff; border: 1px solid #c4d0e0; border-radius: 3px;
  display: flex; align-items: center; padding-left: 6px; gap: 7px;
}
.sq { font-size: 15px; color: #a8a8a8; white-space: nowrap; line-height: 24px; width: 166px; overflow: hidden; }
.sbtn { display: flex; align-items: center; gap: 4px; margin-left: 9px; }

/* bookmarks */
.bookmarks {
  height: 28px; flex: none; background: linear-gradient(#fdfdfb, #f3f1e6 70%, #e2dfce); display: flex; align-items: center;
  padding: 0 0 3px 16px; gap: 9px; border-top: 2px solid #fff; border-bottom: 1px solid #a9a699;
}
.bm-toggle { color: #555; font: 13px/16px "Liberation Mono", monospace; width: 10px; }
.bm-sep { width: 1px; height: 16px; background: #c8c8c8; margin-left: 5px; }
.bm { display: flex; align-items: center; gap: 3px; white-space: nowrap; flex: none; }
.bm-first { width: 64px; }
.bm-ph { gap: 6px; }
.bm-caret { margin-left: 11px; border-top-color: #888; border-width: 4px; border-bottom: 0; }
.bm-l { font: 13px/16px "Liberation Sans", "Noto Sans CJK SC", sans-serif; margin-right: 1px; }
.bm-d { gap: 5px; margin-right: 1px; }
.bm-r { gap: 4px; margin-right: 2px; }
.bm-more { color: #9aa8b8; font-size: 16px; margin-left: 4px; }

/* dimmed page */
.viewport { height: 557px; flex: none; display: flex; }
.page { width: 1349px; position: relative; overflow: hidden; background: #444; }
.site-head { height: 23px; position: relative; display: flex; padding-left: 48px; }
.ghost { width: 110px; height: 3px; margin-left: 30px; background: #1b2b3a; }
.crumbs {
  height: 44px; background: #01182d; display: flex; align-items: center; gap: 9px;
  padding-left: 16px; color: #333d47; font-size: 13px;
}
.columns { display: flex; padding-top: 56px; height: 490px; }
.mainbox { margin-left: 15px; width: 1014px; border: 1px solid #4c4c4c; height: 434px; border-bottom: 0; flex: none; }
.bluestrip { margin: 300px 0 0 65px; width: 688px; height: 12px; background: #2f4251; }
.cad { margin-left: 49px; }
.cadtext { font: 13px "Liberation Sans", sans-serif; fill: #5c5c5c; }
.sidecol { margin-left: 42px; width: 266px; display: flex; flex-direction: column; flex: none; }
.sbox { border: 1px solid #4e4e4e; flex: none; position: relative; }
.sbox-a { height: 109px; margin-bottom: 33px; }
.sbox-b { height: 143px; margin-bottom: 0; }
.sbox-c { height: 109px; margin-bottom: 34px; padding: 14px 0 0 17px; color: #262626; }
.sbox-c h3 { margin: 0 0 9px; font-size: 20px; line-height: 28px; font-weight: 400; }
.sbox-c p { margin: 0 0 6px; font-size: 15px; line-height: 16px; color: #2a2a2a; }
.upcloud { position: absolute; left: 169px; top: 39px; }
.sbox-d { height: 30px; }
.photo { display: block; position: absolute; left: 151px; top: 0; width: 72px; height: 8px; background: #111; }
.askbadge { position: absolute; right: 8px; top: 103px; }
.asktext { font: 15px "Noto Sans CJK SC", sans-serif; fill: #5a2a2a; }

.vscroll { width: 17px; background: #fff; position: relative; display: flex; flex-direction: column; align-items: center; padding-left: 2px; }
.vthumb { width: 15px; height: 80px; background: #b8b8b8; margin-top: 20px; }
.arrow-up { border: 4px solid transparent; border-bottom: 5px solid #555; border-top: 0; margin-top: 11px; }
.arrow-down { border: 4px solid transparent; border-top: 5px solid #555; border-bottom: 0; margin-top: auto; margin-bottom: 7px; }

.hscroll {
  height: 16px; flex: none; background: #f4f4f4; display: flex; align-items: center; padding-left: 6px;
}
.hthumb { width: 1295px; height: 13px; background: #b9b9b9; border: 1px solid #acacac; margin-left: 7px; }
.arrow-left { border: 4px solid transparent; border-right: 4px solid #888; border-left: 0; }
.arrow-right { border: 4px solid transparent; border-left: 4px solid #444; border-right: 0; margin-left: 26px; }

/* status bar */
.statusbar {
  height: 25px; flex: none; background: #e9e6d3; border-top: 1px solid #d5d2bd; display: flex; align-items: center;
  padding-left: 15px; color: #555;
}
.st { display: flex; align-items: center; white-space: nowrap; flex: none; gap: 3px; }
.st-gift { width: 867px; }
.st-live { width: 90px; gap: 3px; }
.st-cross { width: 80px; color: #22b84a; gap: 6px; }
.st-shield { width: 30px; }
.st-rocket { width: 68px; gap: 4px; color: #444; }
.st-dl { color: #333; }

.ime {
  position: absolute; left: 1182px; top: 702px; width: 184px; height: 26px; display: flex; align-items: center;
}
.ime-s {
  width: 28px; height: 26px; background: #f4511e; color: #fff; font: 700 24px/24px "Liberation Sans", sans-serif; text-align: center;
  border-radius: 3px; transform: rotate(-6deg); z-index: 1; flex: none;
}
.ime-bar {
  width: 156px; height: 23px; background: #fff; display: flex; align-items: center; padding-left: 12px; gap: 8px; margin-top: 1px;
}
.ime-zh { color: #1f6fc4; font-size: 16px; line-height: 20px; }
.ime-dot { color: #1f6fc4; font: 700 13px/16px "Liberation Sans", sans-serif; width: 14px; margin-left: -2px; }
.ime-n { font: 700 6px "Liberation Sans", sans-serif; fill: #fff; text-anchor: middle; }

/* task bar */
.taskbar { height: 40px; flex: none; background: #02141f; display: flex; align-items: center; color: #fff; position: relative; }
.start { width: 48px; height: 40px; background: #000; display: flex; align-items: center; justify-content: center; }
.tsearch { width: 344px; height: 40px; background: #333; display: flex; align-items: center; padding-left: 9px; margin-right: 3px; }
.cortana { width: 21px; height: 21px; border: 3px solid #e6e6e6; border-radius: 50%; }
.tstext { margin-left: 6px; color: #8c8c8c; font-size: 14px; line-height: 20px; width: 270px; }
.tmic { margin-left: 12px; }
.slot { width: 49px; height: 40px; display: flex; align-items: center; justify-content: center; flex: none; position: relative; }
.tsep { width: 3px; height: 16px; border-left: 1px solid #3c4a52; border-right: 1px solid #3c4a52; margin: 0 13px 0 7px; }
.slot-active { background: linear-gradient(90deg, #2d3a3e 45px, transparent 45px); }
.under { position: absolute; left: 4px; right: 5px; bottom: 0; height: 3px; background: #76b9ed; }
.under-a { left: 0; right: 4px; }
.tray { position: absolute; right: 0; top: 0; height: 40px; width: 342px; }
.tray > * { position: absolute; }
.cpu { left: 0; top: 3px; width: 48px; display: flex; flex-direction: column; align-items: center; line-height: 18px; font-size: 12px; }
.tr-up { left: 69px; top: 15px; }
.tr-bat { left: 90px; top: 13px; }
.tr-wifi { left: 117px; top: 13px; }
.tr-vol { left: 139px; top: 12px; }
.tr-zh { left: 163px; top: 9px; font-size: 14px; line-height: 20px; }
.tr-s {
  left: 190px; top: 11px; width: 15px; height: 17px; background: #f4511e; color: #fff; border-radius: 3px; transform: rotate(-6deg);
  font: 700 14px/17px "Liberation Sans", sans-serif; text-align: center;
}
.clock { left: 223px; top: 3px; display: flex; flex-direction: column; align-items: center; width: 60px; line-height: 18px; font-size: 12px; }
.notif { left: 301px; top: 9px; }
.badge {
  position: absolute; left: 8px; top: 10px; width: 17px; height: 17px; border-radius: 50%; background: #333; border: 1px solid #aaa;
  font: 700 12px/15px "Liberation Sans", sans-serif; text-align: center; color: #fff;
}

/* screenshot lightbox */
.modal { position: absolute; left: 20px; top: 265px; width: 1307px; height: 289px; background: #f4f4f4; overflow: hidden; }
.modal-top { height: 11px; background: linear-gradient(#fff 60%, #d8d8d8); border-bottom: 1px solid #bdbdbd; display: flex; gap: 12px; }
.modal-top i { height: 2px; background: #888; }
.modal-top .g0 { width: 16px; height: 4px; background: #bbb; }
.g1 { width: 26px; margin-left: 8px; } .g2 { width: 12px; margin-left: 14px; } .g3 { width: 30px; margin-left: 30px; } .g4 { width: 26px; margin-left: 10px; } .g5 { width: 12px; margin-left: 70px; }
.sheet {
  display: grid; width: 1303px;
  grid-template-columns: 32px 80px 37px 225px 183px 172px 67px 41px 43px 54px 67px 67px 78px 82px 75px;
  grid-template-rows: 22px 32px 32px 55px 64px 65px 8px;
  background: #fff; overflow: hidden;
}
.hd {
  background: linear-gradient(#fff, #f0f0f0); border-right: 1px solid #d0d0d0; border-bottom: 2px solid #c4c4c4; text-align: center;
  font-size: 13px; line-height: 20px; white-space: nowrap; overflow: hidden; color: #222;
}
.hd-on { background: linear-gradient(#fbe6b4, #f5c266); color: #6a1878; }
.hd-last { text-align: left; padding-left: 11px; }
.rh {
  background: linear-gradient(90deg, #fbfbfb, #ececec); border-right: 1px solid #c8c8c8; border-bottom: 2px solid #c4c4c4;
  font: 12px/30px "Liberation Mono", monospace; padding-left: 6px; color: #222; display: flex; align-items: center;
}
.rh-on { background: #fbd089; color: #6a1878; }
.rh6 { background: #f4f4f4; border: 0; }
.c {
  background: #b5dcfc; border-right: 1px solid #c0c8d0; border-bottom: 2px solid #c0c8d0; display: flex; align-items: center;
  padding-left: 2px; white-space: nowrap; overflow: hidden; color: #1c1c1c;
}
.cn { font-size: 13px; }
.l2 { line-height: 14px; letter-spacing: -.4px; }
.m { font: 12px/15px "Liberation Mono", monospace; letter-spacing: -.6px; }
.f3 { line-height: 15px; }
.r { color: #e82028; }
.bl { border-left: 1px solid #000; padding-left: 2px; }
.fig { padding: 0; }
.sel { background: #a2d4fc; outline: 1px dotted #333; outline-offset: -2px; }
.e { background: #fff; border-right: 1px solid #d0d0d0; }
.red-n, .blk-n { font: 12px "Liberation Mono", monospace; text-anchor: middle; letter-spacing: -.6px; }
.red-n { fill: #f02a30; }
.blk-n { fill: #111; }
.blk-c { font: 13px "Noto Sans CJK SC", sans-serif; fill: #111; }
.blk-s { font: 10px "Liberation Mono", monospace; fill: #111; }
.aa { font: 9px "Liberation Sans", sans-serif; fill: #d06060; text-anchor: middle; }
.gg { font: 700 13px "Liberation Sans", sans-serif; fill: #fff; text-anchor: middle; }

.marks { position: absolute; left: 0; top: 0; pointer-events: none; }
.note {
  position: absolute; margin: 0; color: #f00; font-size: 22px; line-height: 30px; white-space: nowrap; font-weight: 400;
}
.note b { font-family: "Liberation Sans", sans-serif; font-weight: 700; font-size: 21px; }
.n1 { left: 387px; top: 239px; letter-spacing: .55px; }
.n2 { left: 440px; top: 425px; letter-spacing: .5px; }
.n3 { left: 438px; top: 492px; letter-spacing: .5px; }
.n4 { left: 305px; top: 564px; }

.closex {
  position: absolute; left: 1286px; top: 270px; width: 36px; height: 36px; border-radius: 50%; background: #333; border: 0; padding: 0;
  display: flex; align-items: center; justify-content: center;
}
.sidetools { position: absolute; left: 1283px; top: 423px; width: 44px; display: flex; flex-direction: column; gap: 11px; }
.sidetools span { height: 44px; display: flex; align-items: center; justify-content: center; text-align: center; color: #fff; font-size: 15px; line-height: 19px; }
.sidetools .st-org { padding-bottom: 6px; }
.st-top { background: #b9b9b9; }
.st-org { background: #ff6600; }

.logo {
  position: absolute; left: 6px; top: 15px; width: 50px; height: 48px; background: linear-gradient(#46d85e, #30c56a);
  border: 1px solid #8fb8b0;
}
.logo svg { margin: -1px; }

.netw {
  position: absolute; left: 899px; top: 41px; width: 127px; height: 48px; display: flex; align-items: center;
}
.netw::before {
  content: ""; position: absolute; left: 22px; top: 6px; right: 0; height: 39px; border-radius: 0 20px 20px 0;
  background: linear-gradient(#f4f4f4, #d8d8d8); border: 1px solid #b4b4b4; box-shadow: 0 1px 2px #888;
}
.ball {
  width: 47px; height: 47px; border-radius: 50%; border: 2px solid #c8d4cc; position: relative;
  background: linear-gradient(#12664a 0, #1f8058 34%, #4fd068 35%, #4cc868 100%);
  box-shadow: 0 0 0 1px #1a7a50 inset; color: #f2fff4; text-align: center; font: 15px/43px "Liberation Sans", sans-serif; flex: none;
}
.speeds {
  position: relative; display: grid; grid-template-columns: 8px 38px; row-gap: 5px; align-items: center; margin: 3px 0 0 3px;
  font: 10px/10px "Liberation Sans", sans-serif; color: #222; text-align: right; width: 46px; flex: none;
}
.plus {
  position: relative; width: 20px; height: 20px; margin: 6px 0 0 4px; border-radius: 50%; background: #3a7fd8; color: #fff; border: 1px solid #fff;
  font: 700 16px/18px "Liberation Sans", sans-serif; text-align: center; flex: none;
}
.plus i { position: absolute; right: -4px; top: -5px; width: 9px; height: 9px; border-radius: 50%; background: #d82a2a; }
```
